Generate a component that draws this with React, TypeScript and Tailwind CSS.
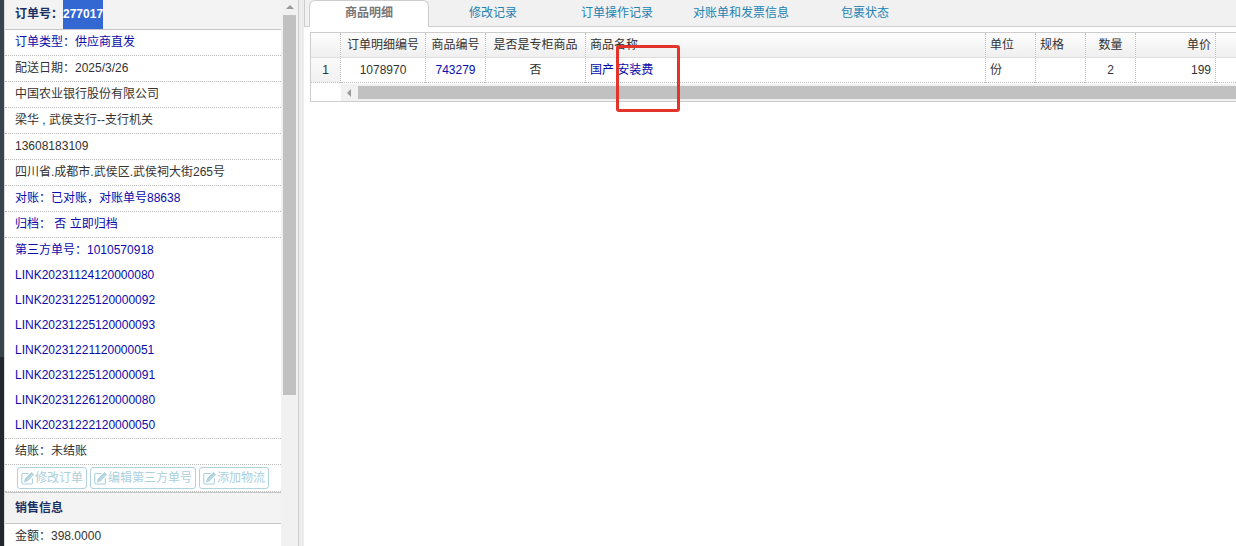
import clsx from "clsx";

type InfoRow = { text: string; link?: boolean };

type Column = {
  title: string;
  value: string;
  width: string;
  align?: string;
  link?: boolean;
};

const infoRows: InfoRow[] = [
  { text: "订单类型：供应商直发", link: true },
  { text: "配送日期：2025/3/26" },
  { text: "中国农业银行股份有限公司" },
  { text: "梁华 , 武侯支行--支行机关" },
  { text: "13608183109" },
  { text: "四川省.成都市.武侯区.武侯祠大街265号" },
  { text: "对账：已对账，对账单号88638", link: true },
  { text: "归档： 否 立即归档", link: true },
];

const linkNumbers = [
  "LINK20231124120000080",
  "LINK20231225120000092",
  "LINK20231225120000093",
  "LINK20231221120000051",
  "LINK20231225120000091",
  "LINK20231226120000080",
  "LINK20231222120000050",
];

const actions = [
  { label: "修改订单", width: "w-[70px]" },
  { label: "编辑第三方单号", width: "w-[106px]" },
  { label: "添加物流", width: "w-[70px]" },
];

const tabs = [
  { label: "商品明细", width: "w-[120px]", active: true },
  { label: "修改记录", width: "w-[128px]" },
  { label: "订单操作记录", width: "w-[120px]" },
  { label: "对账单和发票信息", width: "w-[128px]" },
  { label: "包裹状态", width: "w-[120px]" },
];

const columns: Column[] = [
  { title: "订单明细编号", value: "1078970", width: "w-[85px]", align: "text-center" },
  { title: "商品编号", value: "743279", width: "w-[60px]", align: "text-center", link: true },
  { title: "是否是专柜商品", value: "否", width: "w-[100px]", align: "text-center" },
  { title: "商品名称", value: "国产 安装费", width: "w-[400px]", link: true },
  { title: "单位", value: "份", width: "w-[50px]" },
  { title: "规格", value: "", width: "w-[50px]" },
  { title: "数量", value: "2", width: "w-[50px]", align: "text-center" },
  { title: "单价", value: "199", width: "w-[80px]", align: "text-right" },
];

const EditIcon = () => (
  <svg className="size-[13px] shrink-0" viewBox="0 0 13 13" fill="none" stroke="currentColor" strokeWidth="1.1">
    <path d="M7.5 1.5H2a1.2 1.2 0 0 0-1.2 1.2v8.1A1.2 1.2 0 0 0 2 12h8.2a1.2 1.2 0 0 0 1.2-1.2V6.5" />
    <path d="M3.7 9.6 4.4 7l6.1-6.2 1.8 1.8-6.1 6.2zM4.4 7l1.8 1.8M5.3 7.9l5.6-5.7" />
  </svg>
);

const Sidebar = () => (
  <aside className="flex w-[299px] shrink-0 border-r border-[#cfcfcf]">
    <div className="flex w-1 flex-col">
      <div className="h-[357px] bg-[#37444d]" />
      <div className="flex-1 bg-[#22272d]" />
    </div>
    <div className="w-[277px] overflow-hidden border-l border-[#d9d9d9] bg-white">
      <div className="flex h-[30px] items-center border-b border-[#c6c6c6] bg-[#f3f3f3] pl-2.5 font-bold text-[#1a3063]">
        <span className="pb-0.5">订单号：</span>
        <span className="flex h-full items-center bg-[#3367d1] pb-0.5 text-white">277017</span>
      </div>
      {infoRows.map((row) => (
        <div
          key={row.text}
          className={clsx(
            "h-[26px] border-b border-dotted border-[#bbb] pl-2.5 leading-6",
            row.link ? "text-[#0a0aac]" : "text-[#333]"
          )}
        >
          {row.text}
        </div>
      ))}
      <div className="h-[201px] border-b border-dotted border-[#bbb] pl-2.5 text-[#0a0aac]">
        <div className="h-[25px] leading-6">第三方单号：1010570918</div>
        {linkNumbers.map((num) => (
          <div key={num} className="h-[25px] leading-6">
            {num}
          </div>
        ))}
      </div>
      <div className="h-[26px] border-b border-dotted border-[#bbb] pl-2.5 leading-6 text-[#333]">结账：未结账</div>
      <div className="flex h-[27px] gap-[3px] border-b border-dotted border-[#bbb] pt-0.5 pl-3 text-[#abd0dc]">
        {actions.map((action) => (
          <button
            key={action.label}
            className={clsx(
              "flex h-[22px] items-center justify-center gap-px rounded-[3px] border border-[#b0d2dc] whitespace-nowrap",
              action.width
            )}
          >
            <EditIcon />
            <span>{action.label}</span>
          </button>
        ))}
      </div>
      <div className="h-8 border-y border-[#c6c6c6] bg-[#f3f3f3] pl-2.5 leading-[30px] font-bold text-[#1a3063]">
        销售信息
      </div>
      <div className="pl-2.5 leading-6 text-[#333]">金额：398.0000</div>
    </div>
    {/* vertical scrollbar */}
    <div className="flex flex-1 flex-col items-center bg-[#f1f1f1]">
      <svg className="mt-[5px] h-1 w-2" viewBox="0 0 8 4">
        <path d="M0 4 4 0l4 4z" fill="#999" />
      </svg>
      <div className="mt-1.5 h-[380px] w-[13px] bg-[#c1c1c1]" />
    </div>
  </aside>
);

const TabBar = () => (
  <nav className="flex h-[27px] border-b border-l border-[#cdcdcd] bg-[#f1f1f1] pl-1">
    {tabs.map((tab) => (
      <div
        key={tab.label}
        className={clsx(
          "text-center",
          tab.width,
          tab.active
            ? "h-[27px] rounded-t-md border border-b-0 border-[#cdcdcd] bg-white leading-6 font-bold text-[#777]"
            : "leading-[26px] text-[#2382b2]"
        )}
      >
        {tab.label}
      </div>
    ))}
  </nav>
);

const ProductGrid = () => (
  <div className="mt-[5px] ml-1.5 h-[70px] overflow-hidden border border-r-0 border-[#cdcdcd] text-[#333]">
    <div className="flex w-[1000px] leading-6">
      <div className="w-[30px] shrink-0 border-r border-dotted border-[#bbb]">
        <div className="h-[25px] border-b border-[#ddd] bg-gradient-to-b from-[#fdfdfd] to-[#efefef]" />
        <div className="h-[25px] border-b border-dotted border-[#bbb] bg-gradient-to-b from-[#fafafa] to-[#f1f1f1] text-center">
          1
        </div>
      </div>
      {columns.map((col) => (
        <div
          key={col.title}
          className={clsx("shrink-0 border-r border-dotted border-[#bbb] whitespace-nowrap", col.width, col.align)}
        >
          <div className="h-[25px] border-b border-[#ddd] bg-gradient-to-b from-[#fdfdfd] to-[#efefef] px-1">
            {col.title}
          </div>
          <div
            className={clsx("h-[25px] border-b border-dotted border-[#bbb] px-1", col.link && "text-[#0a0aac]")}
          >
            {col.value}
          </div>
        </div>
      ))}
      <div className="w-10 shrink-0">
        <div className="h-[25px] border-b border-[#ddd] bg-gradient-to-b from-[#fdfdfd] to-[#efefef]" />
        <div className="h-[25px] border-b border-dotted border-[#bbb]" />
      </div>
    </div>
    {/* horizontal scrollbar */}
    <div className="mt-px ml-[30px] flex h-[17px] items-center bg-[#f1f1f1]">
      <svg className="mr-[7px] ml-1.5 h-2 w-1" viewBox="0 0 4 8">
        <path d="M4 0v8L0 4z" fill="#999" />
      </svg>
      <div className="h-[13px] flex-1 bg-[#c1c1c1]" />
    </div>
  </div>
);

const App = () => {
  return (
    <div className="flex h-[546px] w-[1236px] overflow-hidden bg-[#ededed] font-['Liberation_Sans','Noto_Sans_CJK_SC',sans-serif] text-xs">
      <Sidebar />
      <main className="relative ml-[5px] min-w-0 flex-1 overflow-hidden bg-white">
        <TabBar />
        <ProductGrid />
        {/* highlight around the product name */}
        <div className="absolute top-[45px] left-[311.5px] h-[67px] w-16 rounded-[3px] border-[3px] border-[#e3342c]" />
      </main>
    </div>
  );
};

export default App;
